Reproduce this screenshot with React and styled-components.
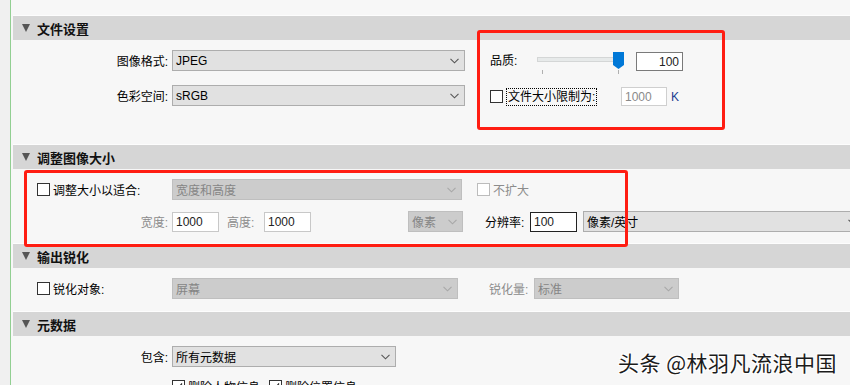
import React from 'react';
import styled, { createGlobalStyle } from 'styled-components';

const GlobalStyle = createGlobalStyle`
  html, body {
    margin: 0;
    padding: 0;
  }
  body {
    width: 850px;
    height: 385px;
    overflow: hidden;
    background: #f0f0f0;
    font-family: "Liberation Sans", "Noto Sans CJK SC", sans-serif;
    font-size: 12px;
    color: #000;
  }
`;

const Page = styled.div`
  position: relative;
  display: flex;
  width: 850px;
  height: 385px;
  overflow: hidden;
`;

const Gutter = styled.div`
  width: 10px;
  flex-shrink: 0;
  background: #f0f0f0;
  border-right: 1px solid #92cf92;
`;

const Panel = styled.div`
  flex: 1;
  background: #f7f7f7;
  padding-top: 16px;
  overflow: hidden;
`;

const Header = styled.div`
  display: flex;
  align-items: center;
  gap: 7px;
  height: 24px;
  margin-left: 2px;
  padding-left: 9px;
  background: #d6d6d6;
  box-shadow: 0 -1px 0 #fdfdfd;
  font-family: "Noto Sans CJK SC", sans-serif;
  font-weight: bold;
  font-size: 13px;
  color: #111;
`;

const Arrow = styled.span`
  width: 0;
  height: 0;
  border-left: 4.5px solid transparent;
  border-right: 4.5px solid transparent;
  border-top: 8px solid #555;
`;

const Body = styled.div`
  display: flex;
  flex-direction: ${p => (p.$row ? 'row' : 'column')};
  gap: ${p => p.$gap || 0}px;
  padding: ${p => p.$top}px 0 ${p => p.$bottom}px 0;
`;

const Column = styled.div`
  display: flex;
  flex-direction: column;
  gap: ${p => p.$gap}px;
  margin-left: ${p => p.$ml || 0}px;
  padding-top: ${p => p.$pt || 0}px;
`;

const Row = styled.div`
  display: flex;
  align-items: ${p => p.$align || 'center'};
  height: ${p => p.$h || 21}px;
  padding-left: ${p => p.$pl || 0}px;
`;

const FieldLabel = styled.span`
  width: ${p => p.$w || 161}px;
  flex-shrink: 0;
  padding-right: 4px;
  box-sizing: border-box;
  text-align: ${p => (p.$left ? 'left' : 'right')};
  margin-left: ${p => p.$ml || 0}px;
  color: ${p => (p.$muted ? '#8c8c8c' : '#000')};
  white-space: nowrap;
  line-height: ${p => p.$lh || 'normal'};
`;

const SelectBox = styled.div`
  display: flex;
  align-items: center;
  justify-content: space-between;
  box-sizing: border-box;
  flex-shrink: 0;
  width: ${p => p.$w}px;
  height: ${p => p.$h || 21}px;
  margin-left: ${p => p.$ml || 0}px;
  padding: 0 5px 0 3px;
  background: ${p => (p.$disabled ? '#cccccc' : '#e1e1e1')};
  border: 1px solid ${p => (p.$disabled ? '#bfbfbf' : '#adadad')};
  color: ${p => (p.$disabled ? '#858585' : '#000')};
  white-space: nowrap;
`;

const Chevron = styled.svg`
  flex-shrink: 0;
  stroke: ${p => (p.$disabled ? '#a8a8a8' : '#555')};
  stroke-width: 1.1;
  fill: none;
`;

const TextInput = styled.input`
  box-sizing: border-box;
  flex-shrink: 0;
  width: ${p => p.$w || 47}px;
  height: ${p => p.$h || 20}px;
  margin-left: ${p => p.$ml || 0}px;
  padding: 0 3px;
  background: #fff;
  border: 1px solid ${p => p.$border || '#c8c8c8'};
  color: ${p => (p.$muted ? '#8a8a8a' : '#222')};
  font: inherit;
  text-align: ${p => (p.$right ? 'right' : 'left')};
  outline: none;
`;

const CheckField = styled.label`
  display: flex;
  align-items: center;
  gap: 3px;
  flex-shrink: 0;
  width: ${p => (p.$w ? `${p.$w}px` : 'auto')};
  margin-left: ${p => p.$ml || 0}px;
  color: ${p => (p.$muted ? '#8c8c8c' : '#000')};
  white-space: nowrap;
`;

const Box = styled.span`
  display: inline-flex;
  align-items: center;
  justify-content: center;
  box-sizing: border-box;
  width: 13px;
  height: 13px;
  background: #fff;
  border: 1px solid ${p => (p.$muted ? '#bcbcbc' : '#333')};
`;

const FocusText = styled.span`
  border: 1px dotted #000;
  padding: 0 1px;
  line-height: 16px;
`;

const Unit = styled.span`
  margin-left: 4px;
  color: #1a3d8f;
`;

const SliderWrap = styled.svg`
  flex-shrink: 0;
`;

const Annotation = styled.div`
  position: absolute;
  left: ${p => p.$x}px;
  top: ${p => p.$y}px;
  width: ${p => p.$w}px;
  height: ${p => p.$h}px;
  box-sizing: border-box;
  border: 3px solid #ff1d12;
  border-radius: 3px;
  pointer-events: none;
`;

const Watermark = styled.div`
  position: absolute;
  left: 618px;
  top: 347px;
  font-family: "Noto Sans CJK SC", sans-serif;
  font-size: 21px;
  letter-spacing: 0.5px;
  color: #1c1c1c;
  text-shadow: 1px 1px 0 #fff, -1px -1px 0 #fff, 1px -1px 0 #fff, -1px 1px 0 #fff;
`;

const Select = ({ w, h, ml, disabled, children }) => (
  <SelectBox $w={w} $h={h} $ml={ml} $disabled={disabled}>
    <span>{children}</span>
    <Chevron $disabled={disabled} width="9" height="6" viewBox="0 0 9 6">
      <polyline points="0.5,0.8 4.5,4.8 8.5,0.8" />
    </Chevron>
  </SelectBox>
);

const Check = ({ checked, muted }) => (
  <Box $muted={muted}>
    {checked && (
      <svg width="9" height="9" viewBox="0 0 9 9">
        <polyline points="1,4.5 3.5,7 8,1.5" fill="none" stroke="#222" strokeWidth="1.2" />
      </svg>
    )}
  </Box>
);

const Section = ({ title, children }) => (
  <>
    <Header>
      <Arrow />
      {title}
    </Header>
    {children}
  </>
);

const Slider = () => (
  <SliderWrap width="89" height="23" viewBox="0 0 89 23">
    <rect x="0.5" y="5.5" width="86" height="4" fill="#e7eaea" stroke="#d4d6d6" />
    <line x1="5.5" y1="18" x2="5.5" y2="22" stroke="#b0b0b0" />
    <line x1="81.5" y1="18" x2="81.5" y2="22" stroke="#b0b0b0" />
    <path d="M76 0 H87 V13 L81.5 17 L76 13 Z" fill="#0078d7" />
  </SliderWrap>
);

export default function App() {
  return (
    <Page>
      <GlobalStyle />
      <Gutter />
      <Panel>
        <Section title="文件设置">
          <Body $row $top={10} $bottom={39}>
            <Column $gap={14}>
              <Row>
                <FieldLabel>图像格式:</FieldLabel>
                <Select w={293}>JPEG</Select>
              </Row>
              <Row>
                <FieldLabel>色彩空间:</FieldLabel>
                <Select w={293}>sRGB</Select>
              </Row>
            </Column>
            <Column $gap={16} $ml={25} $pt={2}>
              <Row $h={19} $align="flex-start">
                <FieldLabel $left $w={47} $lh="19px">品质:</FieldLabel>
                <Slider />
                <TextInput $w={47} $h={19} $ml={10} $right $border="#7a7a7a" defaultValue="100" readOnly />
              </Row>
              <Row $h={19}>
                <CheckField $w={131}>
                  <Check />
                  <FocusText>文件大小限制为:</FocusText>
                </CheckField>
                <TextInput $w={46} $h={19} $muted $border="#cfcfcf" defaultValue="1000" readOnly />
                <Unit>K</Unit>
              </Row>
            </Column>
          </Body>
        </Section>

        <Section title="调整图像大小">
          <Body $gap={11} $top={10} $bottom={12}>
            <Row $pl={26}>
              <CheckField $w={135}>
                <Check />
                调整大小以适合:
              </CheckField>
              <Select w={290} disabled>宽度和高度</Select>
              <CheckField $ml={15} $muted>
                <Check muted />
                不扩大
              </CheckField>
            </Row>
            <Row>
              <FieldLabel $muted>宽度:</FieldLabel>
              <TextInput defaultValue="1000" readOnly />
              <FieldLabel $muted $w={37} $ml={8} $left>高度:</FieldLabel>
              <TextInput defaultValue="1000" readOnly />
              <Select w={55} ml={97} disabled>像素</Select>
              <FieldLabel $w={45} $ml={22} $left>分辨率:</FieldLabel>
              <TextInput $border="#222" defaultValue="100" readOnly />
              <Select w={280} ml={6}>像素/英寸</Select>
            </Row>
          </Body>
        </Section>

        <Section title="输出锐化">
          <Body $top={10} $bottom={13}>
            <Row $pl={26}>
              <CheckField $w={135}>
                <Check />
                锐化对象:
              </CheckField>
              <Select w={286} disabled>屏幕</Select>
              <FieldLabel $muted $left $w={45} $ml={31}>锐化量:</FieldLabel>
              <Select w={145} disabled>标准</Select>
            </Row>
          </Body>
        </Section>

        <Section title="元数据">
          <Body $gap={9} $top={10} $bottom={0}>
            <Row>
              <FieldLabel>包含:</FieldLabel>
              <Select w={224}>所有元数据</Select>
            </Row>
            <Row $pl={161}>
              <CheckField $w={97}>
                <Check checked />
                删除人物信息
              </CheckField>
              <CheckField>
                <Check checked />
                删除位置信息
              </CheckField>
            </Row>
          </Body>
        </Section>
      </Panel>

      <Annotation $x={477} $y={30} $w={248} $h={100} />
      <Annotation $x={24} $y={170} $w={604} $h={77} />
      <Watermark>头条 @林羽凡流浪中国</Watermark>
    </Page>
  );
}
